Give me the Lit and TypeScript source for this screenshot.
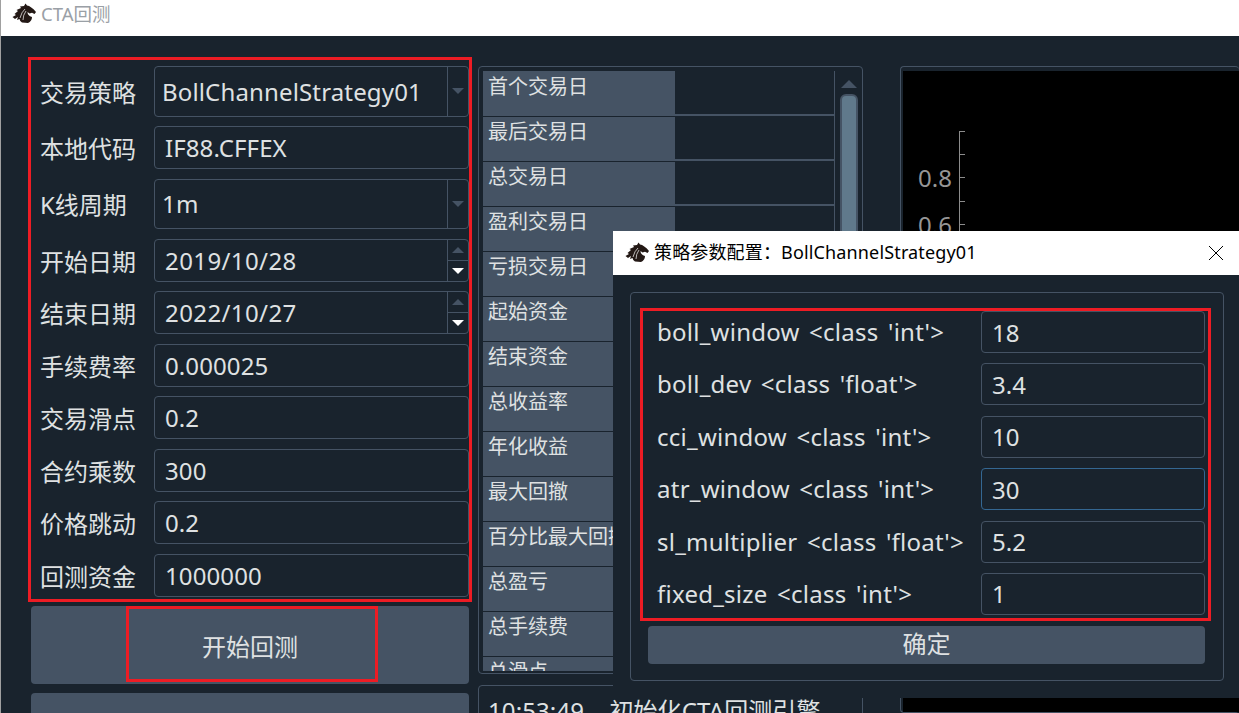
import { LitElement, html, css, svg } from 'lit';
import { customElement } from 'lit/decorators.js';

const horse = svg`<path d="M0.500 14 L4 12 L2.500 11 L6 8 L4.500 7 L9 5 L8 3.500 L12 3 L13.500 0.500 L15 2.500 Q19 3 24 9 L22.500 11 L20 9.800 L17.500 10.500 L15.500 9 Q15.500 12.500 20 14 Q20 18 16 20 L10 19.500 Q8 19 7.500 16 L5 17 L6 14 L3 16 Z" fill="#231815"/><path d="M8 15 Q9.500 9 13 6 M11 17 Q11 12 14 8" fill="none" stroke="#fff" stroke-width="0.700"/>`;

const fields = [
  { label: '交易策略', value: 'BollChannelStrategy01', kind: 'combo' },
  { label: '本地代码', value: 'IF88.CFFEX', kind: 'text' },
  { label: 'K线周期', value: '1m', kind: 'combo' },
  { label: '开始日期', value: '2019/10/28', kind: 'date' },
  { label: '结束日期', value: '2022/10/27', kind: 'date' },
  { label: '手续费率', value: '0.000025', kind: 'text' },
  { label: '交易滑点', value: '0.2', kind: 'text' },
  { label: '合约乘数', value: '300', kind: 'text' },
  { label: '价格跳动', value: '0.2', kind: 'text' },
  { label: '回测资金', value: '1000000', kind: 'text' },
];

const stats = [
  '首个交易日', '最后交易日', '总交易日', '盈利交易日', '亏损交易日', '起始资金', '结束资金',
  '总收益率', '年化收益', '最大回撤', '百分比最大回撤', '总盈亏', '总手续费', '总滑点',
];

const params = [
  { label: "boll_window <class 'int'>", value: '18' },
  { label: "boll_dev <class 'float'>", value: '3.4' },
  { label: "cci_window <class 'int'>", value: '10' },
  { label: "atr_window <class 'int'>", value: '30', focus: true },
  { label: "sl_multiplier <class 'float'>", value: '5.2' },
  { label: "fixed_size <class 'int'>", value: '1' },
];

@customElement('app-root')
export class AppRoot extends LitElement {
  static styles = css`
    :host {
      display: block;
      width: 1239px;
      height: 713px;
      overflow: hidden;
      position: relative;
      font-family: 'Noto Sans', 'Noto Sans CJK SC', sans-serif;
      font-size: 24px;
      color: #dfe1e2;
      background: #19232d;
      border-left: 1px solid #a0a0a0;
      box-sizing: border-box;
    }
    .titlebar {
      height: 36px;
      box-sizing: border-box;
      background: #fff;
      display: flex;
      align-items: flex-start;
      padding: 3px 0 0 11px;
      gap: 5px;
      font-size: 18.5px;
      line-height: 22px;
      color: #9aa0a6;
    }
    .titlebar svg { width: 24px; height: 20px; }
    .main {
      display: flex;
      padding: 21px 0 0 27px;
      height: 656px;
    }
    .left { width: 444px; flex: none; }
    .form {
      border: 3px solid #ed1c24;
      display: grid;
      grid-template-columns: 123px 315px;
      row-gap: 9.5px;
      padding: 6px 0 2.5px;
      align-items: center;
    }
    .label { padding-left: 9px; white-space: nowrap; }
    .input {
      height: 43px;
      box-sizing: border-box;
      border: 1px solid #455364;
      border-radius: 4px;
      display: flex;
      align-items: center;
      padding-left: 10px;
      white-space: nowrap;
      position: relative;
      letter-spacing: 0.1px;
    }
    .input.combo { height: 50.5px; padding-left: 7px; letter-spacing: 0.15px; }
    .input.date { letter-spacing: 0.4px; }
    .input.focus { border-color: #346792; }
    .side {
      position: absolute;
      top: 0;
      bottom: 0;
      right: 0;
      width: 20px;
      border-left: 1px solid #455364;
      display: flex;
      flex-direction: column;
      align-items: center;
      justify-content: center;
    }
    .spin { flex: 1; width: 100%; display: flex; align-items: center; justify-content: center; }
    .spin + .spin { border-top: 1px solid #455364; }
    .tri-down, .tri-up { width: 0; height: 0; border-left: 6px solid transparent; border-right: 6px solid transparent; }
    .tri-down { border-top: 6px solid #455364; }
    .tri-down.on { border-top-color: #fff; }
    .tri-up { border-bottom: 6px solid #455364; }
    .btn {
      background: #455364;
      border-radius: 4px;
      display: flex;
      align-items: center;
      justify-content: center;
      position: relative;
    }
    .run { margin: 4px 3px 0; height: 78px; box-sizing: border-box; }
    .second { margin: 9px 3px 0; height: 78px; }
    .mark {
      position: absolute;
      left: 95px;
      top: 0;
      width: 252px;
      height: 76px;
      box-sizing: border-box;
      border: 3px solid #ed1c24;
    }
    .middle {
      width: 385px;
      flex: none;
      margin-left: 6px;
      padding-top: 9px;
      display: flex;
      flex-direction: column;
      gap: 11px;
    }
    .panel {
      border: 1px solid #455364;
      border-radius: 4px;
      box-sizing: border-box;
    }
    .stats {
      height: 608px;
      flex: none;
      padding: 4px 0 2px 4px;
      display: flex;
    }
    .table {
      width: 351px;
      height: 600px;
      overflow: hidden;
      border-right: 1px solid #455364;
      flex: none;
    }
    .row { display: flex; height: 45px; font-size: 20px; }
    .head {
      width: 192px;
      height: 44px;
      background: #455364;
      padding-left: 5px;
      box-sizing: border-box;
      line-height: 30px;
      white-space: nowrap;
      overflow: hidden;
    }
    .cell { flex: 1; height: 42px; border-bottom: 2px solid #455364; }
    .row:first-child { height: 46px; }
    .row:first-child .head { height: 45px; line-height: 32px; }
    .row:first-child .cell { height: 43px; }
    .scroll { flex: 1; display: flex; flex-direction: column; align-items: center; padding-top: 9px; }
    .tri-big {
      width: 0;
      height: 0;
      border-left: 8px solid transparent;
      border-right: 8px solid transparent;
      border-bottom: 8px solid #455364;
    }
    .handle {
      width: 18px;
      height: 220px;
      margin-top: 6px;
      box-sizing: border-box;
      background: #60798b;
      border: 2px solid #455364;
      border-radius: 6px;
    }
    .log {
      flex: 1;
      padding: 9px 9px;
      white-space: pre;
      line-height: 32px;
      letter-spacing: 0.1px;
    }
    .chart {
      flex: 1;
      margin-left: 37px;
      margin-top: 9px;
      border-right: 0;
      padding: 4px 0 0 2px;
      min-width: 0;
    }
    .plot { background: #000; height: 100%; }
    .plot svg { display: block; }
    .plot text { font-family: 'Noto Sans', sans-serif; font-size: 24px; fill: #969696; }
    .dialog {
      position: absolute;
      left: 612px;
      top: 231px;
      width: 626px;
      height: 467px;
      background: #19232d;
      display: flex;
      flex-direction: column;
    }
    .dlg-title {
      height: 44px;
      flex: none;
      background: #fff;
      color: #000;
      font-size: 18px;
      letter-spacing: 0.15px;
      display: flex;
      align-items: center;
      padding-left: 12px;
      gap: 5px;
    }
    .dlg-title span { margin-top: -4px; }
    .dlg-title svg.logo { width: 24px; height: 20px; margin-top: -3px; }
    .close { margin-left: auto; margin-right: 15px; display: block; }
    .group {
      margin: 17px 15px 17px 17px;
      padding: 15px 9px 0 9px;
      height: 389px;
      box-sizing: border-box;
      border: 1px solid #455364;
      border-radius: 4px;
    }
    .params {
      border: 3px solid #ed1c24;
      display: grid;
      grid-template-columns: 338px 224px;
      row-gap: 10.4px;
      padding-bottom: 3px;
      align-items: center;
      width: 571px;
      box-sizing: border-box;
    }
    .params .label { padding-left: 14px; letter-spacing: 0.25px; word-spacing: 3px; margin-top: -1px; }
    .params .input { height: 42px; }
    .ok { margin: 5px 9px 0 8px; height: 38px; padding-bottom: 4px; box-sizing: border-box; }
  `;

  private renderField(f: { value: string; kind: string }) {
    return html`<div class="input ${f.kind}">
      ${f.value}
      ${f.kind === 'combo' ? html`<div class="side"><div class="tri-down"></div></div>` : ''}
      ${f.kind === 'date'
        ? html`<div class="side">
            <div class="spin"><div class="tri-up"></div></div>
            <div class="spin"><div class="tri-down on"></div></div>
          </div>`
        : ''}
    </div>`;
  }

  render() {
    return html`
      <div class="titlebar">
        <svg viewBox="0 0 24 20">${horse}</svg>
        <span>CTA回测</span>
      </div>
      <div class="main">
        <div class="left">
          <div class="form">
            ${fields.map(f => html`<div class="label">${f.label}</div>${this.renderField(f)}`)}
          </div>
          <div class="btn run">开始回测<div class="mark"></div></div>
          <div class="btn second"></div>
        </div>
        <div class="middle">
          <div class="panel stats">
            <div class="table">
              ${stats.map(s => html`<div class="row"><div class="head">${s}</div><div class="cell"></div></div>`)}
            </div>
            <div class="scroll">
              <div class="tri-big"></div>
              <div class="handle"></div>
            </div>
          </div>
          <div class="panel log">10:53:49    初始化CTA回测引擎</div>
        </div>
        <div class="panel chart">
          <div class="plot">
            <svg width="335" height="200" viewBox="0 0 335 200">
              <path d="M56.500 60 V200 M56.500 60.500 H62 M56.500 83.500 H62 M56.500 106.500 H62 M56.500 130.500 H62 M56.500 153.500 H62" stroke="#8c8c8c" fill="none"/>
              <text x="15" y="116">0.8</text>
              <text x="15" y="163">0.6</text>
            </svg>
          </div>
        </div>
      </div>
      <div class="dialog">
        <div class="dlg-title">
          <svg class="logo" viewBox="0 0 24 20">${horse}</svg>
          <span>策略参数配置：BollChannelStrategy01</span>
          <svg class="close" width="16" height="16" viewBox="0 0 16 16">
            <path d="M1 1 L15 15 M15 1 L1 15" stroke="#000" stroke-width="1" fill="none"/>
          </svg>
        </div>
        <div class="group">
          <div class="params">
            ${params.map(
              p => html`<div class="label">${p.label}</div>
                <div class="input ${p.focus ? 'focus' : ''}">${p.value}</div>`,
            )}
          </div>
          <div class="btn ok">确定</div>
        </div>
      </div>
    `;
  }
}
